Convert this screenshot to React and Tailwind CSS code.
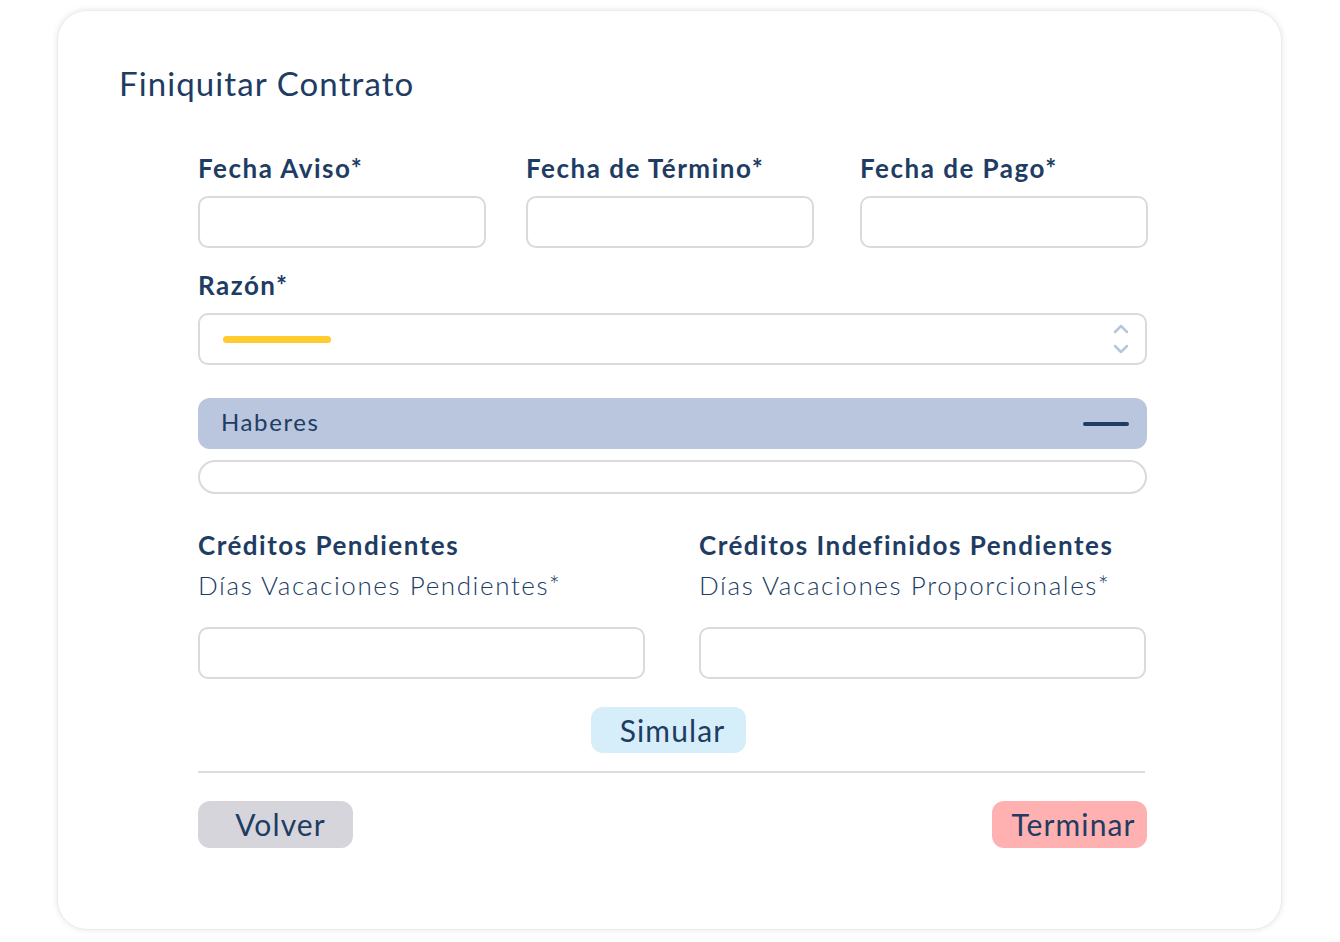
import React from "react";

const navy = "text-[#203c63]";

const Label = ({ children, className = "" }) => (
  <div className={`h-[30px] leading-[30px] text-[26px] font-bold tracking-[1.5px] ${navy} ${className}`}>
    {children}
  </div>
);

const Field = ({ className = "" }) => (
  <div className={`h-[52px] rounded-[10px] border-2 border-[#d9d9de] bg-white ${className}`} />
);

const Chevrons = () => (
  <svg width="18" height="36" viewBox="0 0 18 36" fill="none" stroke="#b9c5dc" strokeWidth="2.5" strokeLinecap="round" strokeLinejoin="round">
    <path d="M3 11 L9 5 L15 11" />
    <path d="M3 25 L9 31 L15 25" />
  </svg>
);

export default function App() {
  return (
    <div className="min-h-screen bg-white pt-[10px] pl-[57px]" style={{ fontFamily: "Lato, 'Noto Sans', sans-serif" }}>
      <div className="w-[1225px] h-[920px] rounded-[30px] bg-white border border-[#ececec] shadow-[0_0_6px_rgba(0,0,0,0.10)] pt-[52px]">
        <h1 className={`pl-[61px] h-[40px] leading-[40px] text-[33px] font-normal tracking-[1.1px] ${navy}`}>
          Finiquitar Contrato
        </h1>

        <div className="pl-[140px] w-[1090px]">
          <div className="flex mt-[50px]">
            <div className="w-[288px]">
              <Label>Fecha Aviso*</Label>
              <Field className="mt-[13px]" />
            </div>
            <div className="w-[288px] ml-[40px]">
              <Label>Fecha de Término*</Label>
              <Field className="mt-[13px]" />
            </div>
            <div className="w-[288px] ml-[46px]">
              <Label>Fecha de Pago*</Label>
              <Field className="mt-[13px]" />
            </div>
          </div>

          <Label className="mt-[22px]">Razón*</Label>
          <div className="mt-[13px] h-[52px] w-[949px] rounded-[10px] border-2 border-[#d9d9de] flex items-center justify-between pl-[23px] pr-[15px]">
            <div className="w-[108px] h-[7px] rounded-full bg-[#ffcb2f]" />
            <Chevrons />
          </div>

          <div className="mt-[33px] h-[51px] w-[949px] rounded-[12px] bg-[#b9c6dd] flex items-center justify-between pl-[23px] pr-[18px]">
            <span className={`text-[24px] tracking-[1.6px] -mt-[4px] ${navy}`}>Haberes</span>
            <div className="w-[46px] h-[4px] rounded-full bg-[#203c63]" />
          </div>
          <div className="mt-[11px] h-[34px] w-[949px] rounded-full border-2 border-[#d9d9de]" />

          <div className="flex mt-[36px]">
            <div className="w-[447px]">
              <Label>Créditos Pendientes</Label>
              <div className={`mt-[10px] h-[30px] leading-[30px] text-[26px] font-light tracking-[1.6px] ${navy}`}>
                Días Vacaciones Pendientes*
              </div>
              <Field className="mt-[27px]" />
            </div>
            <div className="w-[447px] ml-[54px]">
              <Label>Créditos Indefinidos Pendientes</Label>
              <div className={`mt-[10px] h-[30px] leading-[30px] text-[26px] font-light tracking-[1.6px] ${navy}`}>
                Días Vacaciones Proporcionales*
              </div>
              <Field className="mt-[27px]" />
            </div>
          </div>

          <div className="w-[949px] flex justify-center mt-[28px]">
            <button className={`ml-[-8px] w-[155px] h-[46px] rounded-[12px] bg-[#d5eefa] text-[30px] tracking-[1.1px] pl-[8px] ${navy}`}>
              Simular
            </button>
          </div>

          <div className="mt-[18px] w-[947px] h-[2px] bg-[#dcdce2]" />

          <div className="mt-[28px] w-[949px] flex justify-between">
            <button className={`w-[155px] h-[47px] rounded-[12px] bg-[#d6d5dc] text-[30px] tracking-[1.1px] pl-[10px] ${navy}`}>
              Volver
            </button>
            <button className={`w-[155px] h-[47px] rounded-[12px] bg-[#ffb0b0] text-[30px] tracking-[1.1px] pl-[8px] ${navy}`}>
              Terminar
            </button>
          </div>
        </div>
      </div>
    </div>
  );
}
